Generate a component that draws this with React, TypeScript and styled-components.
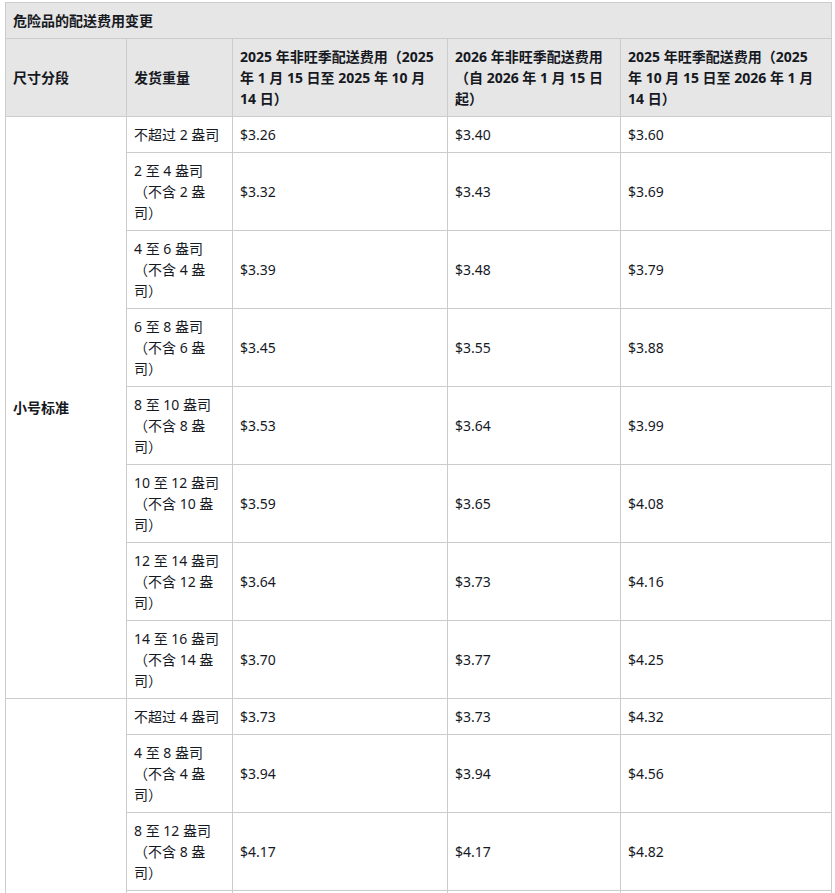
import styled, { createGlobalStyle } from "styled-components";

const GlobalStyle = createGlobalStyle`
  body {
    margin: 0;
    background: #ffffff;
    font-family: "Noto Sans", "Noto Sans CJK SC", sans-serif;
  }
`;

type Row = { weight: string; a: string; b: string; c: string };
type Tier = { name: string; rows: Row[] };

const tiers: Tier[] = [
  {
    name: "小号标准",
    rows: [
      { weight: "不超过 2 盎司", a: "$3.26", b: "$3.40", c: "$3.60" },
      { weight: "2 至 4 盎司（不含 2 盎司）", a: "$3.32", b: "$3.43", c: "$3.69" },
      { weight: "4 至 6 盎司（不含 4 盎司）", a: "$3.39", b: "$3.48", c: "$3.79" },
      { weight: "6 至 8 盎司（不含 6 盎司）", a: "$3.45", b: "$3.55", c: "$3.88" },
      { weight: "8 至 10 盎司（不含 8 盎司）", a: "$3.53", b: "$3.64", c: "$3.99" },
      { weight: "10 至 12 盎司（不含 10 盎司）", a: "$3.59", b: "$3.65", c: "$4.08" },
      { weight: "12 至 14 盎司（不含 12 盎司）", a: "$3.64", b: "$3.73", c: "$4.16" },
      { weight: "14 至 16 盎司（不含 14 盎司）", a: "$3.70", b: "$3.77", c: "$4.25" },
    ],
  },
  {
    name: "大号标准",
    rows: [
      { weight: "不超过 4 盎司", a: "$3.73", b: "$3.73", c: "$4.32" },
      { weight: "4 至 8 盎司（不含 4 盎司）", a: "$3.94", b: "$3.94", c: "$4.56" },
      { weight: "8 至 12 盎司（不含 8 盎司）", a: "$4.17", b: "$4.17", c: "$4.82" },
      { weight: "12 至 16 盎司（不含 12 盎司）", a: "$4.40", b: "$4.40", c: "$5.07" },
      { weight: "1 至 1.25 磅（不含 1 磅）", a: "$4.79", b: "$4.79", c: "$5.46" },
      { weight: "1.25 至 1.5 磅（不含 1.25 磅）", a: "$5.01", b: "$5.01", c: "$5.72" },
      { weight: "1.5 至 1.75 磅（不含 1.5 磅）", a: "$5.17", b: "$5.17", c: "$5.93" },
      { weight: "1.75 至 2 磅（不含 1.75 磅）", a: "$5.33", b: "$5.33", c: "$6.11" },
    ],
  },
];

const App = () => {
  return (
    <Page>
      <GlobalStyle />
      <Table>
        <colgroup>
          <col style={{ width: 121 }} />
          <col style={{ width: 106 }} />
          <col style={{ width: 215 }} />
          <col style={{ width: 173 }} />
          <col style={{ width: 211 }} />
        </colgroup>
        <thead>
          <tr>
            <HeadCell colSpan={5}>危险品的配送费用变更</HeadCell>
          </tr>
          <tr>
            <HeadCell>尺寸分段</HeadCell>
            <HeadCell>发货重量</HeadCell>
            <HeadCell>2025 年非旺季配送费用（2025 年 1 月 15 日至 2025 年 10 月 14 日）</HeadCell>
            <HeadCell>2026 年非旺季配送费用（自 2026 年 1 月 15 日起）</HeadCell>
            <HeadCell>2025 年旺季配送费用（2025 年 10 月 15 日至 2026 年 1 月 14 日）</HeadCell>
          </tr>
        </thead>
        <tbody>
          {tiers.map((tier) =>
            tier.rows.map((r, i) => (
              <tr key={tier.name + i}>
                {i === 0 && (
                  <TierCell rowSpan={tier.rows.length}>{tier.name}</TierCell>
                )}
                <Cell>{r.weight}</Cell>
                <Cell>{r.a}</Cell>
                <Cell>{r.b}</Cell>
                <Cell>{r.c}</Cell>
              </tr>
            ))
          )}
        </tbody>
      </Table>
    </Page>
  );
};
export default App;

const Page = styled.div`
  padding: 2px 4px 0 5px;
`;

const Table = styled.table`
  width: 826px;
  table-layout: fixed;
  border-collapse: collapse;
  font-size: 14px;
  line-height: 21px;
  color: #16191f;
`;

const HeadCell = styled.th`
  background: #e6e6e6;
  border: 1px solid #cccccc;
  padding: 7px 7px;
  text-align: left;
  vertical-align: middle;
  font-weight: 700;
`;

const Cell = styled.td`
  border: 1px solid #cccccc;
  padding: 7px 7px;
  text-align: left;
  vertical-align: middle;
  font-weight: 400;
`;

const TierCell = styled(Cell)`
  font-weight: 700;
`;
